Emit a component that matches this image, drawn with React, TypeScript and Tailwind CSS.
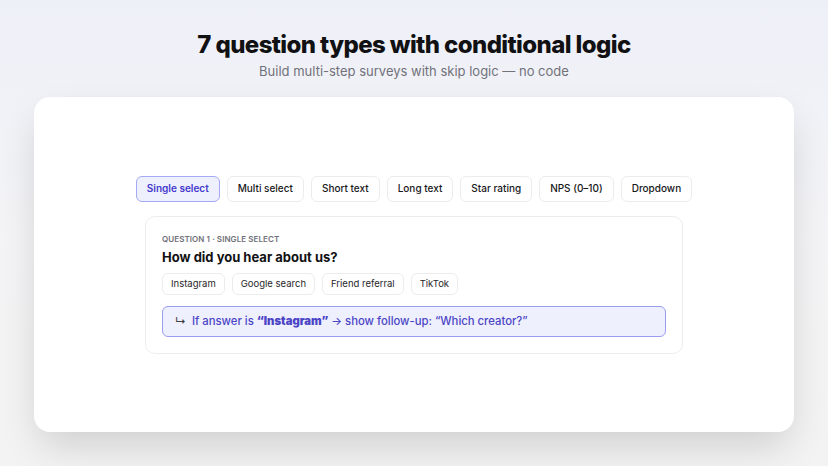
const tabs = ['Single select', 'Multi select', 'Short text', 'Long text', 'Star rating', 'NPS (0–10)', 'Dropdown'];
const options = ['Instagram', 'Google search', 'Friend referral', 'TikTok'];

export default function App() {
  return (
    <div
      className="h-[466px] w-full overflow-hidden bg-gradient-to-b from-[#eef0f8] via-[#f4f4f6] to-[#f3f3f3] px-[34px] pt-[29px]"
      style={{ fontFamily: 'Inter, "Noto Sans", sans-serif' }}
    >
      <div className="text-center">
        <h1 className="text-[24px] font-extrabold leading-[32px] tracking-[-0.025em] text-[#111114]">
          7 question types with conditional logic
        </h1>
        <p className="text-[13px] leading-[20px] text-[#71717a]">
          Build multi-step surveys with skip logic — no code
        </p>
      </div>

      <div className="mt-4 flex h-[335px] flex-col items-center justify-center rounded-2xl bg-white shadow-[0_18px_40px_-6px_rgba(0,0,0,0.16)]">
        <div className="flex gap-[7px]">
          {tabs.map((t, i) => (
            <button
              key={t}
              type="button"
              className={
                i === 0
                  ? 'h-[26px] rounded-md border border-[#a5a8f2] bg-[#eef0fe] px-[10px] text-[10px] font-semibold text-[#4338ca]'
                  : 'h-[26px] rounded-md border border-[#ececef] bg-white px-[10px] text-[10px] font-medium text-[#18181b]'
              }
            >
              {t}
            </button>
          ))}
        </div>

        <div className="mt-[14px] w-[538px] rounded-[10px] border border-[#ededf0] bg-white p-4">
          <div className="text-[8px] font-semibold uppercase leading-[12px] tracking-[0.01em] text-[#71717a]">
            Question 1 · Single select
          </div>
          <div className="mt-[3px] text-[13px] font-bold leading-[18px] text-[#111114]">
            How did you hear about us?
          </div>
          <div className="mt-[7px] flex gap-[7px]">
            {options.map((o) => (
              <span
                key={o}
                className="rounded-md border border-[#ececef] bg-white px-[8px] py-[3px] text-[9.5px] leading-[14px] text-[#27272a]"
              >
                {o}
              </span>
            ))}
          </div>
          <div className="mt-[11px] flex h-[31px] items-center gap-[6px] rounded-md border border-[#9a9df0] bg-[#eef0fd] px-3 text-[11.3px] font-medium text-[#4b45c6]">
            <span className="text-[11px] text-[#3f3f46]">↳</span>
            <span>
              If answer is <b className="font-black">“Instagram”</b> → show follow-up: “Which creator?”
            </span>
          </div>
        </div>
      </div>
    </div>
  );
}
